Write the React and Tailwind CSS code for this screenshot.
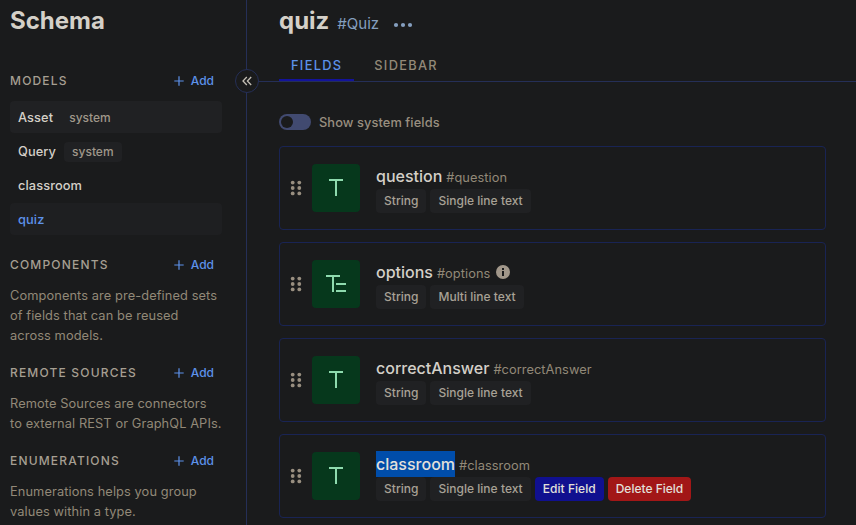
import React from "react";

function AddButton() {
  return (
    <button className="mr-2 flex items-center text-[12px] font-medium leading-5 text-[#5d92ea]">
      <svg width="10" height="10" viewBox="0 0 10 10" className="mr-[7px]" fill="none" stroke="currentColor" strokeWidth="1.2">
        <path d="M5 0.3v9.4M0.3 5h9.4" />
      </svg>
      Add
    </button>
  );
}

function SectionHeader({ title }) {
  return (
    <div className="flex h-5 items-center justify-between">
      <h2 className="text-[12px] font-medium leading-5 tracking-[1.18px] text-[#a69f92]">{title}</h2>
      <AddButton />
    </div>
  );
}

function Section({ title, lines, className }) {
  return (
    <section className={className}>
      <SectionHeader title={title} />
      <p className="mt-[11px] whitespace-nowrap text-[12.8px] leading-5 tracking-[0.1px] text-[#928978]">
        {lines.map((line) => (
          <span key={line} className="block">{line}</span>
        ))}
      </p>
    </section>
  );
}

function Sidebar() {
  return (
    <aside className="h-full w-[247px] shrink-0 border-r border-[#252f57] pl-[10px] pr-6">
      <h1 className="mt-[5px] text-2xl font-bold leading-8 text-[#d4d0c8]">Schema</h1>
      <div className="mt-[34px]">
        <SectionHeader title="MODELS" />
      </div>
      <ul className="mt-[10px] flex flex-col gap-[2px] text-[12.8px] font-medium leading-5 tracking-[0.1px] text-[#d4d0c8]">
        <li className="flex h-8 items-center rounded bg-[#202123] px-2">
          <span className="pt-0.5">Asset</span>
          <span className="ml-2 px-2 pt-0.5 text-[12px] tracking-normal text-[#9f978a]">system</span>
        </li>
        <li className="flex h-8 items-center rounded px-2">
          <span className="pt-0.5">Query</span>
          <span className="ml-2 mt-0.5 h-5 rounded bg-[#202123] px-2 text-[12px] leading-5 tracking-normal text-[#9f978a]">system</span>
        </li>
        <li className="flex h-8 items-center rounded px-2 pt-0.5">classroom</li>
        <li className="flex h-8 items-center rounded bg-[#1e1f21] px-2 pt-0.5 text-[#5d92ea]">quiz</li>
      </ul>
      <Section
        className="mt-5"
        title="COMPONENTS"
        lines={["Components are pre-defined sets", "of fields that can be reused", "across models."]}
      />
      <Section
        className="mt-[17px]"
        title="REMOTE SOURCES"
        lines={["Remote Sources are connectors", "to external REST or GraphQL APIs."]}
      />
      <Section
        className="mt-[17px]"
        title="ENUMERATIONS"
        lines={["Enumerations helps you group", "values within a type."]}
      />
    </aside>
  );
}

function DragHandle() {
  return (
    <svg width="12" height="16" viewBox="0 0 12 16" className="ml-[10px] shrink-0" fill="#998f80">
      {[2.6, 8, 13.4].map((y) => (
        <g key={y}>
          <circle cx="2.7" cy={y} r="1.9" />
          <circle cx="9.3" cy={y} r="1.9" />
        </g>
      ))}
    </svg>
  );
}

function TypeTile({ multi }) {
  return (
    <div className="ml-[10px] flex size-12 shrink-0 items-center justify-center rounded bg-[#06381c]">
      <svg width="24" height="24" viewBox="0 0 24 24" fill="none" stroke="#8edbae" strokeWidth="2">
        {multi ? (
          <path d="M2 4h14M9 4v16M12 12h10M12 19h10" />
        ) : (
          <path d="M5 4h14M12 4v16" />
        )}
      </svg>
    </div>
  );
}

function Chip({ children }) {
  return <span className="h-6 rounded bg-[#202123] px-2 text-[12px] font-medium leading-6 tracking-[0.02px] text-[#a8a296]">{children}</span>;
}

function FieldCard({ name, kind, multi, info, selected }) {
  return (
    <li className="flex h-[84px] items-center rounded border border-[#192454]">
      <DragHandle />
      <TypeTile multi={multi} />
      <div className="ml-4">
        <div className="flex h-[26px] items-center whitespace-nowrap">
          <span className={selected ? "bg-[#004daa] text-[16px] font-medium leading-[26px] text-[#e3e0da]" : "text-[16px] font-medium leading-[26px] text-[#d4d0c8]"}>
            {name}
          </span>
          <span className="ml-1 pt-1 text-[12.8px] leading-[22px] tracking-[0.06px] text-[#928978]">#{name}</span>
          {info && (
            <svg width="14" height="14" viewBox="0 0 14 14" className="ml-[6px]">
              <circle cx="7" cy="7" r="7" fill="#a1978a" />
              <path d="M6 3h2v2H6zM6 6h2v5H6z" fill="#1a1b1c" />
            </svg>
          )}
        </div>
        <div className="flex gap-1 whitespace-nowrap">
          <Chip>String</Chip>
          <Chip>{kind}</Chip>
          {selected && (
            <>
              <button className="h-6 rounded bg-[#10108f] px-2 text-[12px] font-medium leading-6 tracking-[0.04px] text-[#e3e0da]">Edit Field</button>
              <button className="h-6 rounded bg-[#a21717] px-2 text-[12px] font-medium leading-6 text-[#e3e0da]">Delete Field</button>
            </>
          )}
        </div>
      </div>
    </li>
  );
}

export default function App() {
  return (
    <div className="relative flex h-[525px] w-[856px] overflow-hidden bg-[#1a1b1c] font-['Inter',sans-serif]">
      <Sidebar />
      <main className="min-w-0 flex-1">
        <header className="h-[82px] border-b border-[#252f57] pl-8">
          <div className="flex h-[42px] items-center">
            <h1 className="text-2xl font-bold leading-8 text-[#d4d0c8]">quiz</h1>
            <span className="ml-2 pt-[5px] text-[15px] leading-6 text-[#859fbf]">#Quiz</span>
            <svg width="20" height="6" viewBox="0 0 20 6" className="ml-[14px] mt-[8px]" fill="#859fbf">
              <circle cx="3" cy="3" r="2.1" />
              <circle cx="10" cy="3" r="2.1" />
              <circle cx="17" cy="3" r="2.1" />
            </svg>
          </div>
          <nav className="mt-[7px] flex h-8 text-[12.8px] font-medium leading-[33px] tracking-[1.3px]">
            <span className="h-8 border-b-2 border-[#13139b] px-3 text-[#5d92ea]">FIELDS</span>
            <span className="ml-2 px-3 text-[#928978]">SIDEBAR</span>
          </nav>
        </header>
        <div className="pl-8 pr-[30px] pt-8">
          <div className="flex h-4 items-center">
            <span className="flex h-4 w-8 items-center rounded-full bg-[#414a70] pl-[2px]">
              <span className="size-3 rounded-full bg-[#1a1b1c]" />
            </span>
            <span className="ml-2 pt-0.5 text-[12.8px] font-medium leading-4 tracking-[0.1px] text-[#998f80]">Show system fields</span>
          </div>
          <ul className="mt-4 flex flex-col gap-3">
            <FieldCard name="question" kind="Single line text" />
            <FieldCard name="options" kind="Multi line text" multi info />
            <FieldCard name="correctAnswer" kind="Single line text" />
            <FieldCard name="classroom" kind="Single line text" selected />
          </ul>
        </div>
      </main>
      <button className="absolute left-[235px] top-[69px] flex size-6 items-center justify-center rounded-full border border-[#252f57] bg-[#1a1b1c]">
        <svg width="10" height="10" viewBox="0 0 10 10" fill="none" stroke="#c4bfb5" strokeWidth="1.3">
          <path d="M4.8 1L1 5l3.8 4M9.2 1L5.4 5l3.8 4" />
        </svg>
      </button>
    </div>
  );
}
